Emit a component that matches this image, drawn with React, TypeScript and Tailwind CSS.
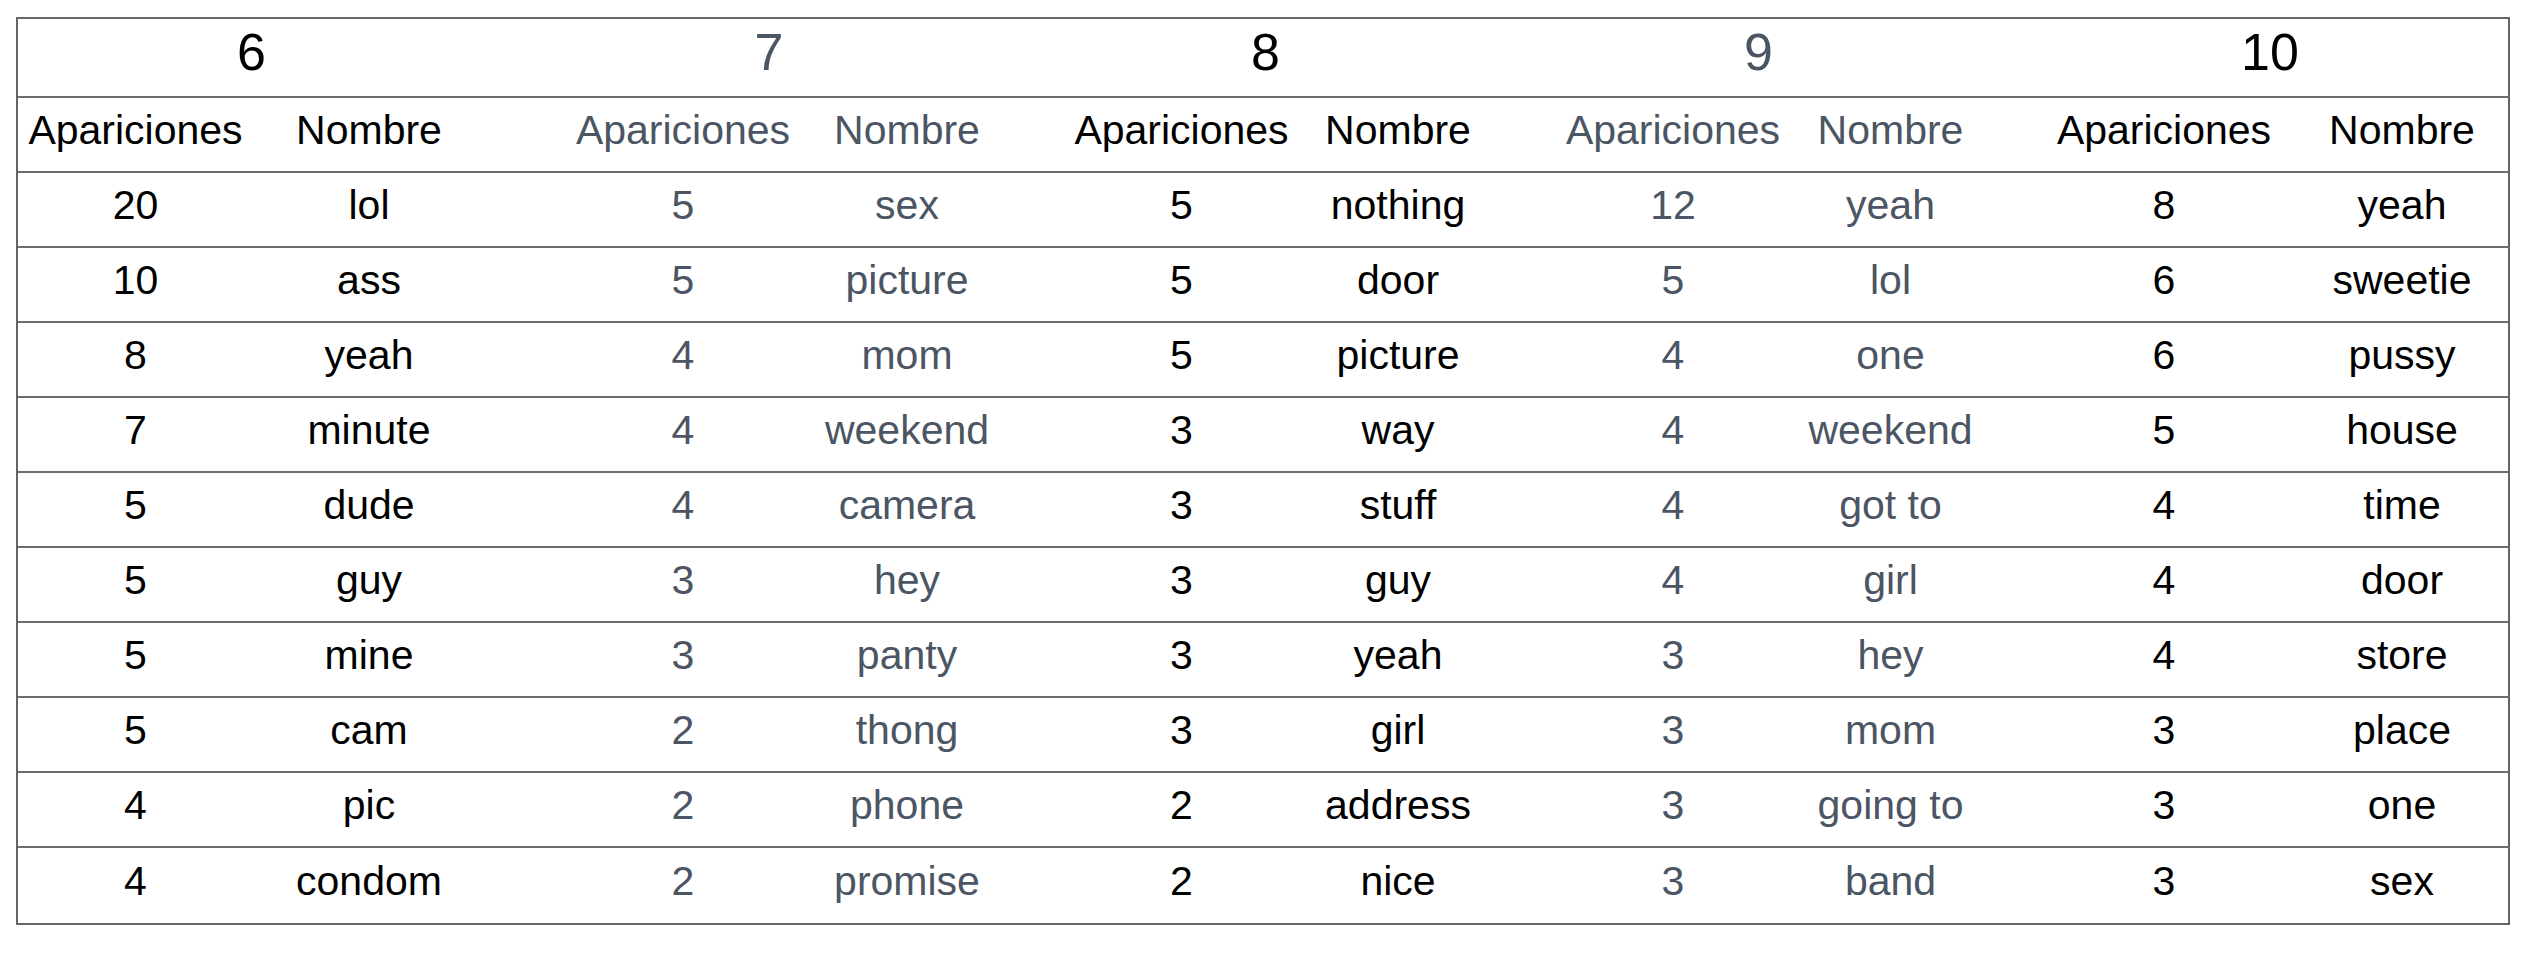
import React from 'react';

type Entry = [string, string];

interface Group {
  title: string;
  muted: boolean;
  rows: Entry[];
}

const groups: Group[] = [
  {
    title: '6',
    muted: false,
    rows: [
      ['20', 'lol'], ['10', 'ass'], ['8', 'yeah'], ['7', 'minute'], ['5', 'dude'],
      ['5', 'guy'], ['5', 'mine'], ['5', 'cam'], ['4', 'pic'], ['4', 'condom'],
    ],
  },
  {
    title: '7',
    muted: true,
    rows: [
      ['5', 'sex'], ['5', 'picture'], ['4', 'mom'], ['4', 'weekend'], ['4', 'camera'],
      ['3', 'hey'], ['3', 'panty'], ['2', 'thong'], ['2', 'phone'], ['2', 'promise'],
    ],
  },
  {
    title: '8',
    muted: false,
    rows: [
      ['5', 'nothing'], ['5', 'door'], ['5', 'picture'], ['3', 'way'], ['3', 'stuff'],
      ['3', 'guy'], ['3', 'yeah'], ['3', 'girl'], ['2', 'address'], ['2', 'nice'],
    ],
  },
  {
    title: '9',
    muted: true,
    rows: [
      ['12', 'yeah'], ['5', 'lol'], ['4', 'one'], ['4', 'weekend'], ['4', 'got to'],
      ['4', 'girl'], ['3', 'hey'], ['3', 'mom'], ['3', 'going to'], ['3', 'band'],
    ],
  },
  {
    title: '10',
    muted: false,
    rows: [
      ['8', 'yeah'], ['6', 'sweetie'], ['6', 'pussy'], ['5', 'house'], ['4', 'time'],
      ['4', 'door'], ['4', 'store'], ['3', 'place'], ['3', 'one'], ['3', 'sex'],
    ],
  },
];

// 5 groups of (Apariciones, Nombre) with a narrow spacer column between groups
const gridCols =
  'grid grid-cols-[235px_232px_60px_276px_172px_56px_265px_168px_59px_264px_171px_56px_264px_212px]';

const tone = (muted: boolean) => (muted ? 'text-[#4b5563]' : 'text-black');

const Cell: React.FC<{ muted: boolean; children?: React.ReactNode }> = ({ muted, children }) => (
  <div className={`flex items-center justify-center whitespace-nowrap pb-[8px] ${tone(muted)}`}>
    {children}
  </div>
);

export default function App() {
  return (
    <div className="min-h-screen bg-white pt-[17px] pl-[16px] font-['Liberation_Sans',Arial,sans-serif]">
      <div className="w-[2494px] border-2 border-[#666666]">
        {/* Group titles */}
        <div className={`${gridCols} h-[79px] border-b-2 border-[#6e6e6e] text-[52px] leading-none`}>
          {groups.map((g, gi) => (
            <React.Fragment key={g.title}>
              <div className={`col-span-2 flex items-center justify-center pb-[12px] ${tone(g.muted)}`}>
                {g.title}
              </div>
              {gi < groups.length - 1 && <div />}
            </React.Fragment>
          ))}
        </div>

        {/* Column headers */}
        <div className={`${gridCols} h-[75px] border-b-2 border-[#6e6e6e] text-[41px]`}>
          {groups.map((g, gi) => (
            <React.Fragment key={g.title}>
              <Cell muted={g.muted}>Apariciones</Cell>
              <Cell muted={g.muted}>Nombre</Cell>
              {gi < groups.length - 1 && <div />}
            </React.Fragment>
          ))}
        </div>

        {/* Data rows */}
        {groups[0].rows.map((_, ri) => (
          <div
            key={ri}
            className={`${gridCols} h-[75px] text-[41px] ${ri < groups[0].rows.length - 1 ? 'border-b-2 border-[#6e6e6e]' : ''}`}
          >
            {groups.map((g, gi) => (
              <React.Fragment key={g.title}>
                <Cell muted={g.muted}>{g.rows[ri][0]}</Cell>
                <Cell muted={g.muted}>{g.rows[ri][1]}</Cell>
                {gi < groups.length - 1 && <div />}
              </React.Fragment>
            ))}
          </div>
        ))}
      </div>
    </div>
  );
}
